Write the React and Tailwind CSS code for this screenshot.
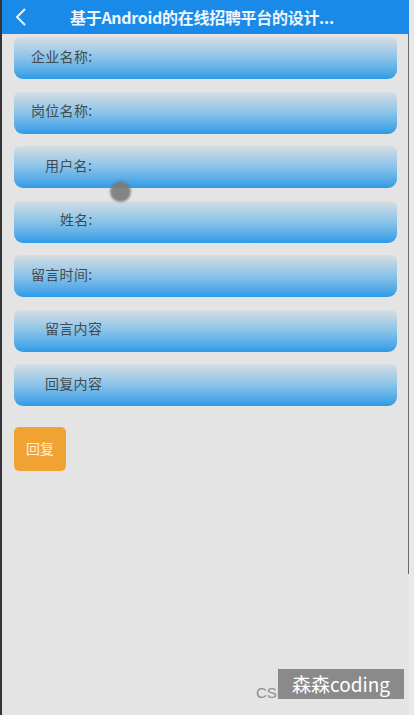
import React from 'react';

const fields = [
    { label: '企业名称:', pad: 'pl-[17px]' },
    { label: '岗位名称:', pad: 'pl-[17px]' },
    { label: '用户名:', pad: 'pl-[31px]' },
    { label: '姓名:', pad: 'pl-[46px]' },
    { label: '留言时间:', pad: 'pl-[17px]' },
    { label: '留言内容', pad: 'pl-[31px]' },
    { label: '回复内容', pad: 'pl-[31px]' },
];

const App = () => {
    return (
        <div className="relative w-[414px] h-[715px] overflow-hidden bg-[#e4e4e4] font-['Noto_Sans_CJK_SC','Noto_Sans',sans-serif]">
            <div className="flex h-full">
                <div className="w-[409px] h-full border-l-2 border-[#333] flex flex-col">
                    {/* Header */}
                    <div className="h-[34px] bg-[#1a8ae9] flex items-center text-white">
                        <svg className="ml-[12px] w-[14px] h-[20px]" viewBox="0 0 14 20" fill="none">
                            <path d="M11 2 L3 10 L11 18" stroke="#e8f2fb" strokeWidth="2" />
                        </svg>
                        <span className="ml-[42px] text-[16px] font-bold tracking-[-0.3px] text-[#eef5fc]">
                            基于Android的在线招聘平台的设计...
                        </span>
                    </div>

                    {/* Body */}
                    <div className="flex h-[540px] border-r border-[#6a6a6a]">
                        <div className="flex-1 flex flex-col pl-[12px] pr-[11px] pt-[3px] gap-[12.5px]">
                            {fields.map((f) => (
                                <div
                                    key={f.label}
                                    className={`h-[42px] rounded-b-[9px] rounded-t-[6px] bg-gradient-to-b from-[#d6dde2] via-[#88c3e9] to-[#2a9be6] flex items-center pb-[4px] text-[14px] tracking-[0.3px] text-[#424b52] ${f.pad}`}
                                >
                                    {f.label}
                                </div>
                            ))}

                            <button className="mt-[8px] w-[52px] h-[44px] rounded-[5px] bg-[#f0a233] text-[14px] text-[#fbefdc] flex items-center justify-center">
                                回复
                            </button>
                        </div>
                    </div>
                </div>
                <div className="flex-1 h-full bg-[#e8e8e8]" />
            </div>

            {/* touch indicator */}
            <div className="absolute left-[110px] top-[181px] w-[21px] h-[21px] rounded-full bg-[#7a7a7a] blur-[1px] opacity-90" />

            {/* watermark */}
            <div className="absolute left-[278px] top-[669px] w-[126px] h-[30px] bg-[#8a8a8a] flex items-center justify-center text-[19px] text-white">
                森森coding
            </div>
            <span className="absolute left-[256px] top-[682px] text-[15px] text-[#8e8e8e] font-['Liberation_Sans',sans-serif]">CSD</span>
        </div>
    );
};

export default App;
